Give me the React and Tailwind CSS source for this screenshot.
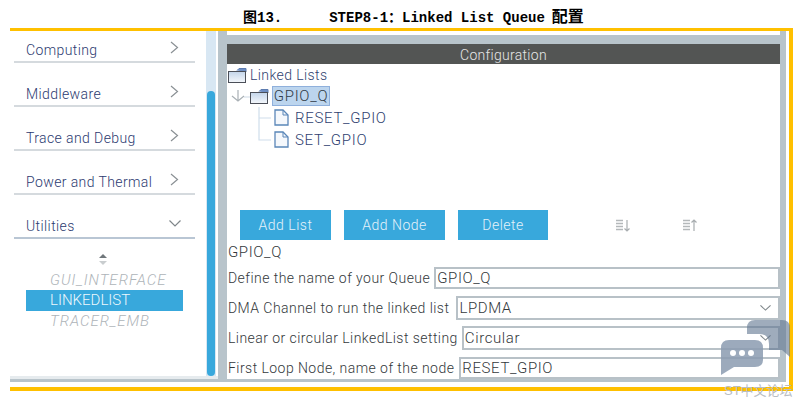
import React from "react";

const menuItems = ["Computing", "Middleware", "Trace and Debug", "Power and Thermal"];

const FolderIcon = () => (
  <svg width="19" height="15" viewBox="0 0 19 15" className="shrink-0">
    <defs>
      <linearGradient id="folderFill" x1="0" y1="0" x2="0" y2="1">
        <stop offset="0" stopColor="#c3d5ea" />
        <stop offset="1" stopColor="#f4f7fb" />
      </linearGradient>
    </defs>
    <path d="M9 2.5 L11 0.5 H18 V4" fill="#6f8fc4" stroke="#5d7cb0" />
    <rect x="0.5" y="3.5" width="17" height="11" fill="url(#folderFill)" stroke="#4b4f58" />
  </svg>
);

const FileIcon = () => (
  <svg width="15" height="17" viewBox="0 0 15 17" className="shrink-0">
    <path d="M1 1 H9 L14 6 V16 H1 Z" fill="#f5f8fc" stroke="#5a86b8" strokeWidth="1.3" />
    <path d="M9 1 V6 H14" fill="none" stroke="#5a86b8" />
  </svg>
);

const TreeJoin = ({ last }) => (
  <svg width="16" height="22" viewBox="0 0 16 22" className="shrink-0">
    <path d={last ? "M1 0 V11 H13" : "M1 0 V22 M1 11 H13"} fill="none" stroke="#cfdeec" strokeWidth="1.2" />
  </svg>
);

const SortIcon = ({ up }) => (
  <svg width="14" height="13" viewBox="0 0 14 13" className="shrink-0">
    <path d="M0 1.5 H7 M0 4.5 H7 M0 7.5 H7 M0 10.5 H7" stroke="#b4b8ba" strokeWidth="1.3" />
    <path
      d={up ? "M11 12 V1 M8.5 3.5 L11 1 L13.5 3.5" : "M11 1 V12 M8.5 9.5 L11 12 L13.5 9.5"}
      fill="none"
      stroke="#a8adb0"
      strokeWidth="1.2"
    />
  </svg>
);

const ArrowRight = () => (
  <svg width="9" height="13" viewBox="0 0 9 13" className="-mt-[6px] shrink-0">
    <path d="M1 1 L7.5 6.5 L1 12" fill="none" stroke="#8a9094" strokeWidth="1.2" />
  </svg>
);

const ArrowDown = ({ width = 12, height = 7 }) => (
  <svg width={width} height={height} viewBox="0 0 12 7" preserveAspectRatio="none" className="shrink-0">
    <path d="M0.5 0.5 L6 6 L11.5 0.5" fill="none" stroke="#7f868a" strokeWidth="1.2" />
  </svg>
);

const Button = ({ label, width }) => (
  <button className={`h-[30px] bg-[#38a8dc] pt-px text-[14px] font-light tracking-[0.5px] text-[#e4f2fa] ${width}`}>
    {label}
  </button>
);

const FormRow = ({ label, value, select, height, gap }) => (
  <div className={`flex items-center ${gap}`}>
    <span className="pt-px text-[14px] font-light tracking-[0.45px] whitespace-nowrap text-[#33383b]">{label}</span>
    <div className={`flex flex-1 items-center justify-between border-2 border-[#b8c1c7] pl-px pr-[7px] text-[15px] font-light tracking-[0.6px] text-[#33383b] ${height}`}>
      <span>{value}</span>
      {select && <ArrowDown width={11} height={6} />}
    </div>
  </div>
);

const Sidebar = () => (
  <div className="flex w-[196px] flex-col pl-1 pr-[11px]">
    {menuItems.map((item, i) => (
      <div
        key={item}
        className={`flex items-center justify-between border-b-2 border-[#d5dade] pl-3 pr-[16px] text-[14px] font-light tracking-[0.4px] text-[#2c3a70] ${
          i === 0 ? "h-[32px] pt-[8px]" : "h-[44px] pt-[20px]"
        }`}
      >
        <span>{item}</span>
        <ArrowRight />
      </div>
    ))}
    <div className="flex h-[44px] items-center justify-between border-b-2 border-[#b9c6d4] pl-3 pr-[14px] pt-[20px] text-[14px] font-light tracking-[0.4px] text-[#2c3a70]">
      <span>Utilities</span>
      <div className="-mt-[6px]"><ArrowDown /></div>
    </div>
    <div className="mt-[15px] flex flex-col items-center pr-[3px]">
      <svg width="8" height="11" viewBox="0 0 8 11">
        <path d="M4 0 L8 4 H0 Z" fill="#70777b" />
        <path d="M4 11 L8 7 H0 Z" fill="#c9cdcf" />
      </svg>
    </div>
    <div className="ml-3 mt-[5px] flex w-[157px] flex-col text-[15px] font-light">
      <div className="flex h-[20px] items-center pl-6 italic tracking-[1px] text-[#aeb4b9]">GUI_INTERFACE</div>
      <div className="flex h-[21px] items-center bg-[#38a8dc] pl-6 text-[#eef8fd]">LINKEDLIST</div>
      <div className="flex h-[20px] items-center pl-6 italic tracking-[1px] text-[#aeb4b9]">TRACER_EMB</div>
    </div>
  </div>
);

const Scrollbar = () => (
  <div className="flex w-[10px] bg-[#d8e7f3] pt-[60px] pl-px pr-px">
    <div className="w-full rounded-[5px] bg-[#38a8dc]" />
  </div>
);

const TreeView = () => (
  <div className="h-[149px] bg-white pl-px pt-[2px] text-[15px] font-light tracking-[0.7px] text-[#2f3f70]">
    <div className="flex h-[20px] items-center gap-[3px] text-[14px] tracking-[0.4px]">
      <FolderIcon />
      <span>Linked Lists</span>
    </div>
    <div className="flex h-[21px] items-center">
      <svg width="22" height="15" viewBox="0 0 22 15" className="shrink-0">
        <path d="M10 1 V12 M4 7 L10 12 L16 7" fill="none" stroke="#a9b0b5" strokeWidth="1.2" />
        <path d="M16 8 H22" stroke="#d5e0ea" strokeWidth="1.2" />
      </svg>
      <FolderIcon />
      <span className="ml-[3px] flex h-[20px] w-[58px] items-center justify-center border border-[#8fb0dc] bg-[#bcd5ee] text-[#303b46]">
        GPIO_Q
      </span>
    </div>
    <div className="flex h-[22px] items-center pl-[30px]">
      <TreeJoin />
      <FileIcon />
      <span className="ml-[6px]">RESET_GPIO</span>
    </div>
    <div className="flex h-[22px] items-center pl-[30px]">
      <TreeJoin last />
      <FileIcon />
      <span className="ml-[6px]">SET_GPIO</span>
    </div>
  </div>
);

const ConfigPanel = () => (
  <div className="flex flex-1 flex-col">
    <div className="mt-1 h-[9px] bg-[#b8c4cb]" />
    <div className="flex h-[20px] items-center justify-center bg-[#535554] pt-[3px] text-[14px] font-light tracking-[0.3px] text-[#e6e6e6]">
      Configuration
    </div>
    <TreeView />
    <div className="ml-0 flex h-[30px] shrink-0 items-center gap-[13px] bg-white pl-[13px]">
      <Button label="Add List" width="w-[91px]" />
      <Button label="Add Node" width="w-[101px]" />
      <Button label="Delete" width="w-[90px]" />
      <div className="ml-[55px]"><SortIcon /></div>
      <div className="ml-[40px]"><SortIcon up /></div>
    </div>
    <div className="flex flex-1 flex-col bg-white pl-px">
      <div className="flex h-[27px] items-center pb-[3px] text-[15px] font-light tracking-[0.6px] text-[#33383b]">GPIO_Q</div>
      <FormRow label="Define the name of your Queue" value="GPIO_Q" height="h-[22px]" gap="gap-[4px]" />
      <div className="h-[7px]" />
      <FormRow label="DMA Channel to run the linked list" value="LPDMA" select height="h-[24px]" gap="gap-[7px]" />
      <div className="h-[6px]" />
      <FormRow label="Linear or circular LinkedList setting" value="Circular" select height="h-[24px]" gap="gap-[4px]" />
      <div className="h-[7px]" />
      <FormRow label="First Loop Node, name of the node" value="RESET_GPIO" height="h-[22px]" gap="gap-[5px]" />
    </div>
  </div>
);

const Watermark = () => (
  <div className="absolute left-[720px] top-[318px] flex flex-col items-start">
    <svg width="72" height="60" viewBox="0 0 72 60">
      <path d="M27 16 V10 Q27 2 35 2 H62 Q70 2 70 10 V39 L62 32 H49 V26 Q49 16 39 16 Z" fill="#5f7590" fillOpacity="0.6" />
      <path d="M9 22 H35 Q43 22 43 30 V42 Q43 49 35 49 H14 L1 57 V30 Q1 22 9 22 Z" fill="#8b9bb0" fillOpacity="0.85" />
      <circle cx="13" cy="35" r="3" fill="#fff" />
      <circle cx="22" cy="35" r="3" fill="#fff" />
      <circle cx="31" cy="35" r="3" fill="#fff" />
    </svg>
    <span className="ml-1 mt-[3px] whitespace-nowrap text-[13px] text-[#b9bdc2] [font-family:'Liberation_Sans','Noto_Sans_CJK_SC',sans-serif]">
      ST中文论坛
    </span>
  </div>
);

export default function App() {
  return (
    <div className="relative flex h-[403px] w-[800px] flex-col overflow-hidden bg-white [font-family:Roboto,'Noto_Sans',sans-serif]">
      <h1 className="flex h-[28px] items-start pl-[243px] pt-[9px] text-[14px] font-bold leading-[18px] whitespace-pre text-black [font-family:'Liberation_Mono','Noto_Sans_CJK_SC',monospace]">
        <span>图13.</span>
        <span className="ml-[47px]">STEP8-1：Linked List Queue</span>
        <span className="ml-[7px] text-[16px]">配置</span>
      </h1>
      <div className="ml-[10px] flex h-[363px] w-[783px] border-t-[3px] border-r-4 border-b-4 border-[#ffc000] pr-[3px]">
        <div className="flex h-[351px] flex-1 border-b-[3px] border-[#b8c4cb]">
          <div className="flex border-b-[3px] border-[#e6ebee]">
            <Sidebar />
            <Scrollbar />
            <div className="w-[2px]" />
          </div>
          <div className="w-[9px] bg-[#b8c4cb]" />
          <ConfigPanel />
          <div className="w-[6px] bg-[#b8c4cb]" />
        </div>
      </div>
      <Watermark />
    </div>
  );
}
